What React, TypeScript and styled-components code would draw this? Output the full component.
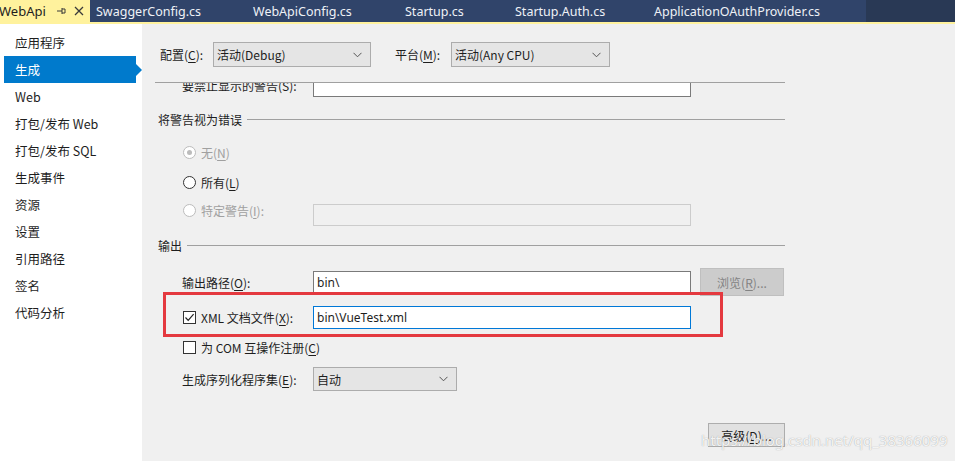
import React from "react";
import styled, { createGlobalStyle } from "styled-components";

const Global = createGlobalStyle`
  html, body { margin: 0; padding: 0; }
  body {
    width: 955px;
    height: 461px;
    overflow: hidden;
    background: #f0f0f0;
    font-family: "Noto Sans", "Noto Sans CJK SC", sans-serif;
    font-size: 12px;
    color: #1e1e1e;
  }
  u { text-decoration: underline; text-underline-offset: 2px; }
`;

const Page = styled.div`
  position: relative;
  width: 955px;
  height: 461px;
  display: flex;
  flex-direction: column;
  overflow: hidden;
`;

/* ---------- tab bar ---------- */
const TabBar = styled.div`
  height: 22px;
  display: flex;
  background: #293955;
  border-bottom: 2px solid #fff29d;
  flex-shrink: 0;
`;

const ActiveTab = styled.div`
  width: 90px;
  background: #fff29d;
  display: flex;
  align-items: center;
  color: #1e1e1e;
  font-size: 13px;
  font-family: "Noto Sans", "Noto Sans CJK SC", sans-serif;
`;

const ActiveTitle = styled.span`
  margin-left: -1px;
  width: 56px;
  white-space: nowrap;
`;

const TabIcon = styled.svg<{ $ml: number }>`
  width: 12px;
  height: 12px;
  margin-left: ${(p) => p.$ml}px;
  flex-shrink: 0;
`;

const TabStrip = styled.div`
  display: flex;
  background: #30446a;
  height: 22px;
`;

const Tab = styled.div<{ $w: number; $pl: number }>`
  width: ${(p) => p.$w}px;
  padding-left: ${(p) => p.$pl}px;
  box-sizing: border-box;
  display: flex;
  align-items: center;
  color: #eef1f6;
  font-size: 12.5px;
  white-space: nowrap;
  font-family: "Noto Sans", sans-serif;
`;

const TabFill = styled.div`
  flex: 1;
`;

/* ---------- body ---------- */
const Body = styled.div`
  flex: 1;
  display: flex;
  min-height: 0;
`;

const Sidebar = styled.div`
  width: 142px;
  background: #ffffff;
  padding-top: 5px;
  box-sizing: border-box;
  flex-shrink: 0;
`;

const NavItem = styled.div<{ $active?: boolean }>`
  position: relative;
  height: 27px;
  margin: 0 6px 0 4px;
  padding-left: 11px;
  display: flex;
  align-items: center;
  font-size: 12.5px;
  color: ${(p) => (p.$active ? "#ffffff" : "#1e1e1e")};
  background: ${(p) => (p.$active ? "#007acc" : "transparent")};
  font-family: "Noto Sans CJK SC", "Noto Sans", sans-serif;
`;

const NavArrow = styled.span`
  position: absolute;
  right: -6px;
  top: 50%;
  margin-top: -6px;
  width: 0;
  height: 0;
  border-top: 6px solid transparent;
  border-bottom: 6px solid transparent;
  border-left: 6px solid #007acc;
`;

const Content = styled.div`
  flex: 1;
  background: #f0f0f0;
  padding: 18px 0 0 13px;
  display: flex;
  flex-direction: column;
  font-family: "Noto Sans CJK SC", "Noto Sans", sans-serif;
`;

const TopRow = styled.div`
  display: flex;
  align-items: center;
  height: 25px;
  padding-left: 5px;
`;

const TopLabel = styled.span<{ $w: number; $ml?: number }>`
  width: ${(p) => p.$w}px;
  margin-left: ${(p) => p.$ml ?? 0}px;
  white-space: nowrap;
`;

const Select = styled.div<{ $w: number; $h?: number }>`
  width: ${(p) => p.$w}px;
  height: ${(p) => p.$h ?? 25}px;
  box-sizing: border-box;
  background: #e5e5e5;
  border: 1px solid #acacac;
  display: flex;
  align-items: center;
  padding: 0 8px 0 3px;
  justify-content: space-between;
  font-family: "Noto Sans CJK SC", "Noto Sans", sans-serif;
`;

const Chevron = () => (
  <svg width="9" height="6" viewBox="0 0 9 6">
    <path d="M0.5 0.8 L4.5 4.8 L8.5 0.8" fill="none" stroke="#555" strokeWidth="1" />
  </svg>
);

const ScrollArea = styled.div`
  margin-top: 15px;
  width: 630px;
  flex: 1;
  border-top: 1px solid #a0a0a0;
  overflow: hidden;
`;

const ScrollInner = styled.div`
  margin-top: -9px;
  display: flex;
  flex-direction: column;
`;

const Row = styled.div<{ $h: number; $mt: number; $top?: boolean }>`
  height: ${(p) => p.$h}px;
  margin-top: ${(p) => p.$mt}px;
  display: flex;
  align-items: ${(p) => (p.$top ? "flex-start" : "center")};
  padding-left: 27px;
`;

const FieldLabel = styled.span<{ $disabled?: boolean }>`
  width: 131px;
  flex-shrink: 0;
  white-space: nowrap;
  color: ${(p) => (p.$disabled ? "#a0a0a0" : "#1e1e1e")};
`;

const Header = styled.div<{ $mt: number }>`
  margin-top: ${(p) => p.$mt}px;
  height: 16px;
  display: flex;
  align-items: center;
  padding-left: 3px;
  gap: 5px;
  &::after {
    content: "";
    flex: 1;
    height: 1px;
    background: #a0a0a0;
  }
`;

const TextInput = styled.div<{ $disabled?: boolean; $focus?: boolean; $h?: number }>`
  width: 378px;
  height: ${(p) => p.$h ?? 22}px;
  box-sizing: border-box;
  background: ${(p) => (p.$disabled ? "#f0f0f0" : "#ffffff")};
  border: 1px solid
    ${(p) => (p.$disabled ? "#cccccc" : p.$focus ? "#0078d7" : "#7a7a7a")};
  display: flex;
  align-items: center;
  padding-left: 3px;
  font-family: "Noto Sans", "Noto Sans CJK SC", sans-serif;
`;

const Check = styled.span<{ $disabled?: boolean; $round?: boolean }>`
  width: 13px;
  height: 13px;
  box-sizing: border-box;
  border: 1px solid ${(p) => (p.$disabled ? "#bcbcbc" : "#333333")};
  border-radius: ${(p) => (p.$round ? "50%" : "0")};
  background: #ffffff;
  margin: 0 5px 0 1px;
  display: inline-flex;
  align-items: center;
  justify-content: center;
  flex-shrink: 0;
`;

const Dot = styled.span`
  width: 5px;
  height: 5px;
  border-radius: 50%;
  background: #bcbcbc;
`;

const OptText = styled.span<{ $disabled?: boolean }>`
  color: ${(p) => (p.$disabled ? "#a0a0a0" : "#1e1e1e")};
  white-space: nowrap;
`;

const Option = styled.span`
  display: flex;
  align-items: center;
  width: 131px;
  height: 12px;
  flex-shrink: 0;
`;

const Button = styled.div<{ $disabled?: boolean; $h: number }>`
  width: 84px;
  height: ${(p) => p.$h}px;
  box-sizing: border-box;
  background: ${(p) => (p.$disabled ? "#cccccc" : "#e1e1e1")};
  border: 1px solid ${(p) => (p.$disabled ? "#bfbfbf" : "#adadad")};
  color: ${(p) => (p.$disabled ? "#838383" : "#1e1e1e")};
  display: flex;
  align-items: center;
  justify-content: center;
  margin-left: 9px;
`;

const ButtonRow = styled.div`
  margin-top: 32px;
  padding-left: 544px;
  display: flex;
`;

const Annotation = styled.div`
  position: absolute;
  left: 163px;
  top: 292px;
  width: 560px;
  height: 45px;
  box-sizing: border-box;
  border: 3px solid #e4393f;
  pointer-events: none;
`;

const Watermark = styled.div`
  position: absolute;
  left: 701px;
  top: 430px;
  font-family: "Noto Sans", sans-serif;
  font-size: 15px;
  color: rgba(255, 255, 255, 0.9);
  text-shadow: 0 0 1px rgba(110, 110, 110, 0.7);
  white-space: nowrap;
  pointer-events: none;
`;

const navItems = [
  "应用程序",
  "生成",
  "Web",
  "打包/发布 Web",
  "打包/发布 SQL",
  "生成事件",
  "资源",
  "设置",
  "引用路径",
  "签名",
  "代码分析",
];

const tabs = [
  { t: "SwaggerConfig.cs", w: 137, pl: 6 },
  { t: "WebApiConfig.cs", w: 152, pl: 26 },
  { t: "Startup.cs", w: 110, pl: 26 },
  { t: "Startup.Auth.cs", w: 139, pl: 26 },
  { t: "ApplicationOAuthProvider.cs", w: 238, pl: 26 },
];

const CheckMark = () => (
  <svg width="11" height="11" viewBox="0 0 11 11">
    <path d="M1.5 5.5 L4.2 8.3 L9.6 2.2" fill="none" stroke="#222" strokeWidth="1.2" />
  </svg>
);

export default function App() {
  return (
    <Page>
      <Global />
      <TabBar>
        <ActiveTab>
          <ActiveTitle>WebApi</ActiveTitle>
          <TabIcon $ml={0} viewBox="0 0 12 12">
            <path d="M2 6 H7 M7 3 V9 M7 4 H10 M7 8 H10 M10 4 V8" fill="none" stroke="#3a3a3a" strokeWidth="1" />
          </TabIcon>
          <TabIcon $ml={6} viewBox="0 0 12 12">
            <path d="M2 2 L10 10 M10 2 L2 10" fill="none" stroke="#3a3a3a" strokeWidth="1.3" />
          </TabIcon>
        </ActiveTab>
        <TabStrip>
          {tabs.map((t) => (
            <Tab key={t.t} $w={t.w} $pl={t.pl}>
              {t.t}
            </Tab>
          ))}
        </TabStrip>
        <TabFill />
      </TabBar>
      <Body>
        <Sidebar>
          {navItems.map((n) => (
            <NavItem key={n} $active={n === "生成"}>
              {n}
              {n === "生成" && <NavArrow />}
            </NavItem>
          ))}
        </Sidebar>
        <Content>
          <TopRow>
            <TopLabel $w={53}>
              配置(<u>C</u>):
            </TopLabel>
            <Select $w={158}>
              <span>活动(Debug)</span>
              <Chevron />
            </Select>
            <TopLabel $w={56} $ml={24}>
              平台(<u>M</u>):
            </TopLabel>
            <Select $w={159}>
              <span>活动(Any CPU)</span>
              <Chevron />
            </Select>
          </TopRow>
          <ScrollArea>
            <ScrollInner>
              <Row $h={23} $mt={0}>
                <FieldLabel>要禁止显示的警告(S):</FieldLabel>
                <TextInput $h={23} />
              </Row>
              <Header $mt={14}>将警告视为错误</Header>
              <Row $h={20} $mt={15}>
                <Option>
                  <Check $round $disabled>
                    <Dot />
                  </Check>
                  <OptText $disabled>
                    无(<u>N</u>)
                  </OptText>
                </Option>
              </Row>
              <Row $h={20} $mt={10}>
                <Option>
                  <Check $round />
                  <OptText>
                    所有(<u>L</u>)
                  </OptText>
                </Option>
              </Row>
              <Row $h={22} $mt={12} $top>
                <Option>
                  <Check $round $disabled />
                  <OptText $disabled>
                    特定警告(<u>I</u>):
                  </OptText>
                </Option>
                <TextInput $disabled />
              </Row>
              <Header $mt={11}>输出</Header>
              <Row $h={28} $mt={15}>
                <FieldLabel>
                  输出路径(<u>O</u>):
                </FieldLabel>
                <TextInput>bin\</TextInput>
                <Button $disabled $h={28}>
                  浏览(<u>R</u>)...
                </Button>
              </Row>
              <Row $h={23} $mt={10}>
                <Option>
                  <Check>
                    <CheckMark />
                  </Check>
                  <OptText>
                    XML 文档文件(<u>X</u>):
                  </OptText>
                </Option>
                <TextInput $focus $h={23}>
                  bin\VueTest.xml
                </TextInput>
              </Row>
              <Row $h={16} $mt={10}>
                <Option>
                  <Check />
                  <OptText>
                    为 COM 互操作注册(<u>C</u>)
                  </OptText>
                </Option>
              </Row>
              <Row $h={24} $mt={12}>
                <FieldLabel>
                  生成序列化程序集(<u>E</u>):
                </FieldLabel>
                <Select $w={144} $h={24}>
                  <span>自动</span>
                  <Chevron />
                </Select>
              </Row>
              <ButtonRow>
                <Button $h={24}>
                  高级(<u>D</u>)...
                </Button>
              </ButtonRow>
            </ScrollInner>
          </ScrollArea>
        </Content>
      </Body>
      <Annotation />
      <Watermark>https://blog.csdn.net/qq_38366099</Watermark>
    </Page>
  );
}
